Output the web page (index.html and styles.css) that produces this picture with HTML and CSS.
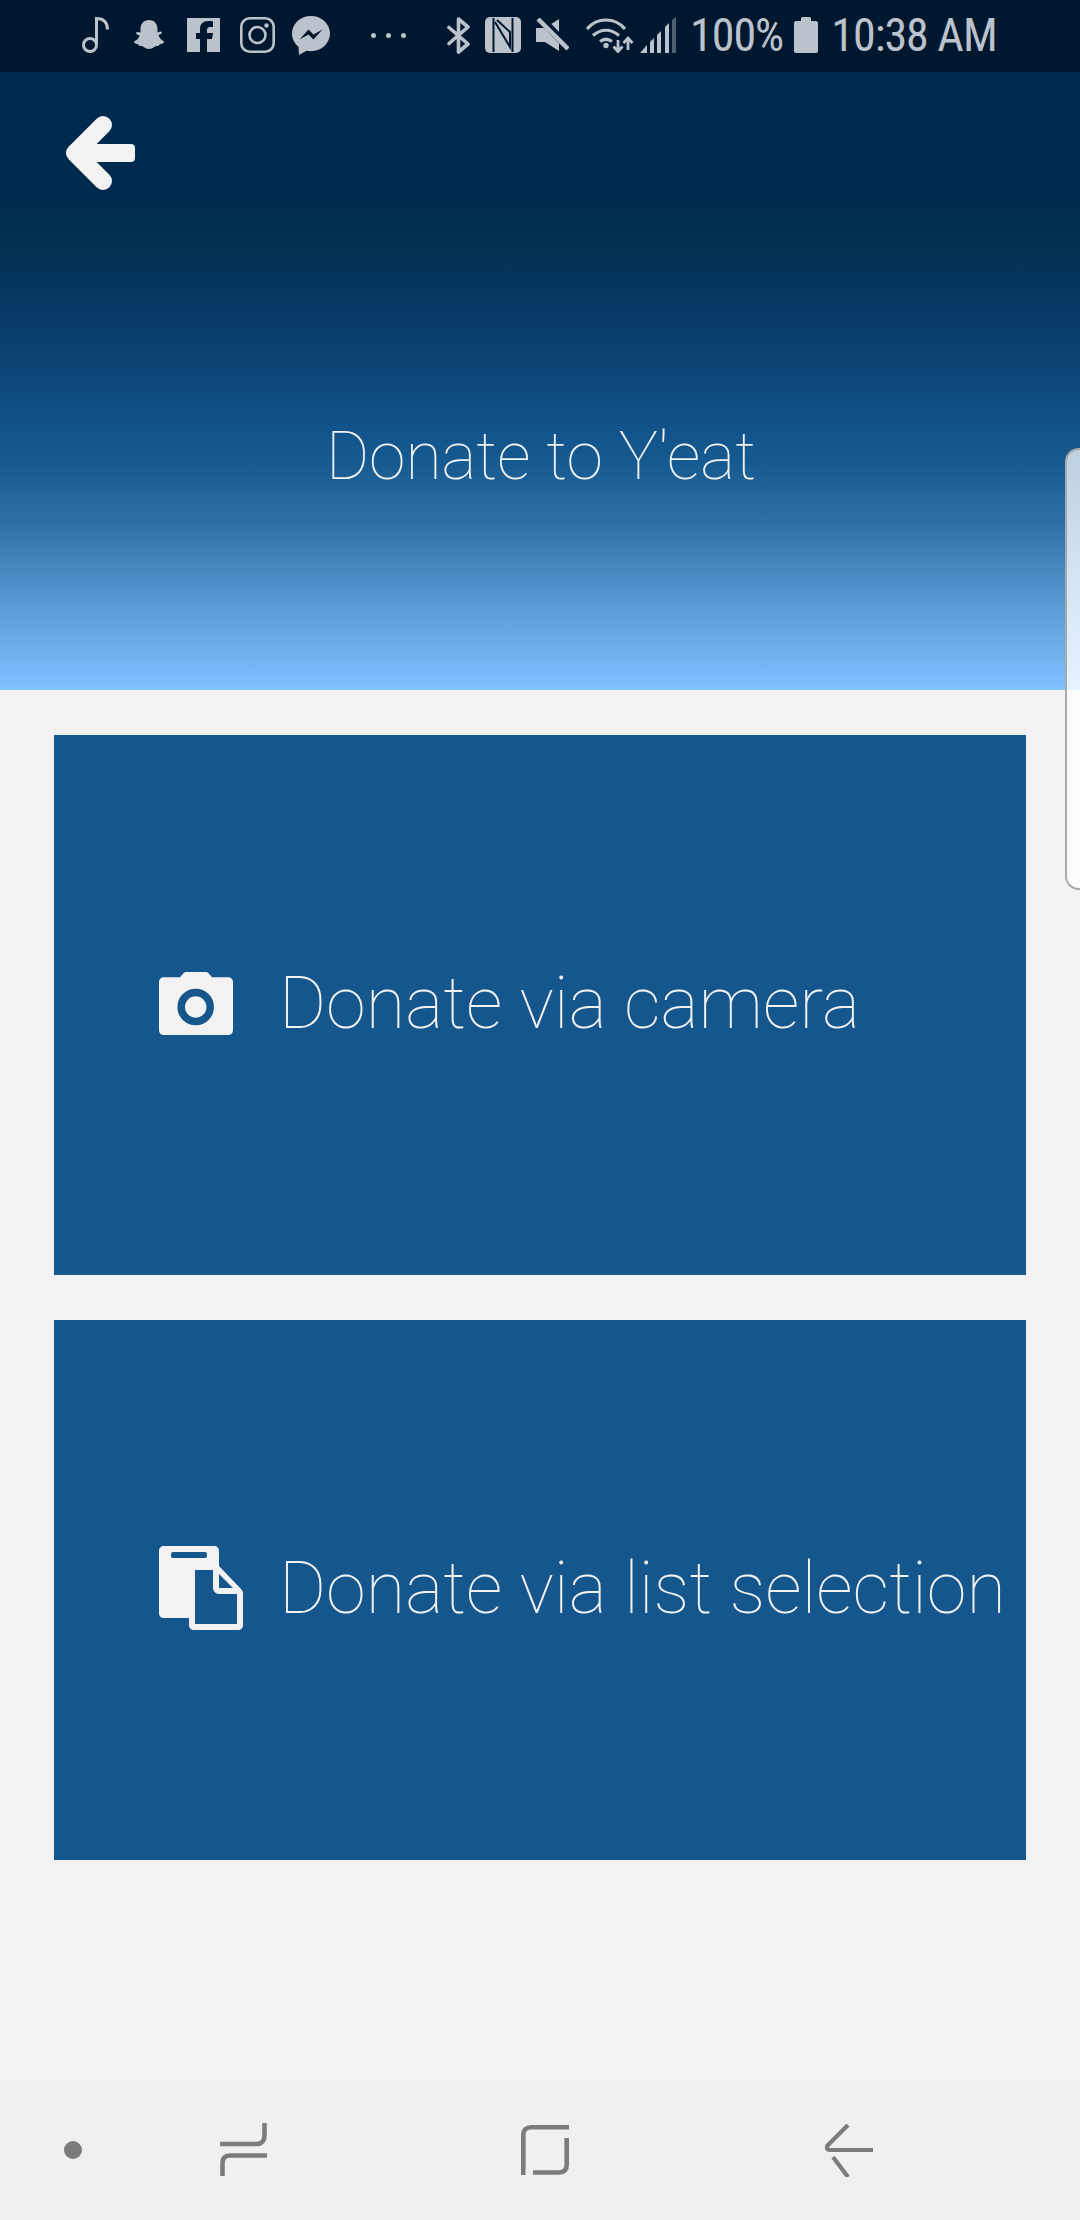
FILE: index.html
```html
<!DOCTYPE html>
<html lang="en">
<head>
    <meta charset="UTF-8">
    <meta name="viewport" content="width=device-width, initial-scale=1.0">
    <title>Donate to Y'eat</title>
    <link rel="stylesheet" href="styles.css">
</head>
<body>
    <div class="status-bar">
        <svg class="ico" width="27" height="36" viewBox="0 0 27 36"><circle cx="8" cy="28" r="6.500" fill="none" stroke="#bcc2cb" stroke-width="3"/><path d="M14.500 28V1.500c7 0 11 4 11 11" fill="none" stroke="#bcc2cb" stroke-width="3"/></svg>
        <svg class="ico ic-ghost" width="30" height="30" viewBox="0 0 30 30"><path d="M15 0c5.500 0 8.500 4 8.500 9v3.500l3-1c1.500 0 2 1.500.5 2.500l-2.500 1c.5 3 3 5 5.500 6.500 0 2-2.500 2.500-4.500 3-.5 1.500-1 1.500-3 1.500-2 0-3.500 3-7.500 3s-5.500-3-7.500-3c-2 0-2.500 0-3-1.500-2-.5-4.500-1-4.500-3C2.500 20.500 5 18.500 5.500 15.500L3 14.500c-1.500-1-1-2.500.5-2.500l3 .5V9C6.500 4 9.500 0 15 0z" fill="#bcc2cb"/></svg>
        <svg class="ico ic-fb" width="33" height="34" viewBox="0 0 33 34"><rect width="33" height="34" fill="#bcc2cb"/><path d="M13 34V21H9v-6h4v-4c0-5 3-8 8-8 2 0 4 .2 5 .3V9h-3c-2 0-3 1-3 3v3h6l-1 6h-5v13z" fill="#00182f"/></svg>
        <svg class="ico ic-insta" width="35" height="36" viewBox="0 0 35 36"><rect x="1.300" y="1.300" width="32.400" height="33.400" rx="8.500" fill="none" stroke="#bcc2cb" stroke-width="2.600"/><circle cx="17.500" cy="18" r="8" fill="none" stroke="#bcc2cb" stroke-width="2.600"/><circle cx="26.500" cy="8.500" r="2.200" fill="#bcc2cb"/></svg>
        <svg class="ico ic-msg" width="38" height="39" viewBox="0 0 38 39"><path d="M19 0C8.500 0 0 7.800 0 17.500c0 5.300 2.500 10 6.500 13.200L7 39l7.500-4.300c1.400.3 3 .5 4.500.5 10.500 0 19-8 19-17.700S29.500 0 19 0z" fill="#bcc2cb"/><path d="M7.500 23.500l9-10 5 5 9-5-9 10-5-5z" fill="#00182f"/></svg>
        <div class="status-dots"><i></i><i></i><i></i></div>
        <svg class="ico ic-bt" width="23" height="37" viewBox="0 0 23 37"><path d="M2 10.500l19 16.500-9.500 8V2L21 10 2 26.500" fill="none" stroke="#bcc2cb" stroke-width="3.600" stroke-linejoin="round" stroke-linecap="round"/></svg>
        <svg class="ico ic-nfc" width="36" height="36" viewBox="0 0 36 36"><rect width="36" height="36" rx="5" fill="#bcc2cb"/><path d="M8.500 1v34M27.500 1v34" stroke="#00182f" stroke-width="2"/><path d="M10 5l15 25V15L12 3" fill="none" stroke="#00182f" stroke-width="2"/></svg>
        <svg class="ico ic-mute" width="33" height="34" viewBox="0 0 33 34"><path d="M0 10h9l14-9v32L9 24H0z" fill="#bcc2cb"/><path d="M4 0l32 33" stroke="#00182f" stroke-width="8"/><path d="M2 1l30 30" stroke="#bcc2cb" stroke-width="4.500"/></svg>
        <svg class="ico ic-wifi" width="48" height="35" viewBox="0 0 48 35"><g fill="none" stroke="#bcc2cb" stroke-width="3.200"><path d="M1 11C11-1 29-1 39 11"/><path d="M7 17.500c8-7 18-7 26 0"/><path d="M14 23.500c4-3 8-3 12 0"/></g><circle cx="20" cy="27.500" r="2.700" fill="#bcc2cb"/><path d="M32 22v11M27.500 28.500l4.500 5 4.500-5M42 32V20M37.500 25l4.500-5 4.500 5" fill="none" stroke="#bcc2cb" stroke-width="2.800"/></svg>
        <svg class="ico ic-signal" width="36" height="36" viewBox="0 0 36 36"><path d="M0 36l7-8v8zM10 36V25l4-4v15zM17 36V18l4-4v22zM25 36V10l4-4v30z" fill="#bcc2cb"/><path d="M32 36V3l4-3v36z" fill="#4c5f73"/></svg>
        <span class="status-text ic-pct">100%</span>
        <svg class="ico ic-batt" width="24" height="36" viewBox="0 0 24 36"><path d="M7 1.500C7 .5 8 0 9 0h6c1 0 2 .5 2 1.500V4h5c1 0 2 1 2 2v28c0 1-1 2-2 2H2c-1 0-2-1-2-2V6c0-1 1-2 2-2h5z" fill="#bcc2cb"/></svg>
        <span class="status-text ic-time">10:38 AM</span>
    </div>

    <header class="top">
        <button class="back-btn">
            <svg width="69" height="74" viewBox="0 0 69 74"><path d="M37 9L9 37l28 28" fill="none" stroke="#f2f2f2" stroke-width="18" stroke-linecap="round" stroke-linejoin="round"/><rect x="9" y="28" width="60" height="18" rx="4" fill="#f2f2f2"/></svg>
        </button>
        <h1>Donate to Y'eat</h1>
    </header>

    <main class="options">
        <a class="option">
            <div class="option-icon">
                <svg width="74" height="63" viewBox="0 0 74 63"><path d="M5 5.300h16l3.500-4C25 .6 25.800 0 27 0h20c1.200 0 2 .6 2.500 1.300l3.500 4h16c3 0 5 2 5 5V58c0 3-2 5-5 5H5c-3 0-5-2-5-5V10.300c0-3 2-5 5-5z" fill="#f2f2f2"/><circle cx="36.700" cy="35" r="14.500" fill="none" stroke="#15568c" stroke-width="7.500"/></svg>
            </div>
            <span>Donate via camera</span>
        </a>
        <a class="option">
            <div class="option-icon">
                <svg width="84" height="84" viewBox="0 0 84 84"><path d="M5 0h50c3 0 5 2 5 5v15l22 23c1.500 1.500 2 3 2 5v31c0 3-2 5-5 5H35c-3 0-5-2-5-5v-7H5c-3 0-5-2-5-5V5c0-3 2-5 5-5z" fill="#f2f2f2"/><rect x="12" y="6" width="36" height="6" rx="2" fill="#15568c"/><path d="M36 24h18v18c0 3 3 6 6 6h18v30H36z" fill="#15568c"/><path d="M60 28l14 14H60z" fill="#15568c"/></svg>
            </div>
            <span>Donate via list selection</span>
        </a>
    </main>

    <div class="edge-panel"></div>

    <nav class="nav-bar">
        <i class="nav-dot"></i>
        <svg class="recents" width="47" height="53" viewBox="0 0 47 53"><path d="M44.500 0v13c0 5-3 8-8 8H0M2.500 53V40c0-5 3-7.500 8-7.500H47" fill="none" stroke="#7c7c7c" stroke-width="4.600"/></svg>
        <svg class="home" width="48" height="50" viewBox="0 0 48 50"><path d="M2.300 50V10c0-5 3-7.700 8-7.700H48M45.700 13v27c0 5-3 7.500-8 7.500H12" fill="none" stroke="#7c7c7c" stroke-width="4.600"/></svg>
        <svg class="back" width="48" height="53" viewBox="0 0 48 53"><path d="M23 1L3 21c-2 2-1.500 5 2 5h43M8 33l15 20" fill="none" stroke="#7c7c7c" stroke-width="4.200"/></svg>
    </nav>
</body>
</html>
```

FILE: styles.css
```css
html, body {
    margin: 0;
    padding: 0;
}

body {
    width: 1080px;
    height: 2220px;
    background-color: #f2f2f2;
    font-family: 'Roboto', sans-serif;
    display: flex;
    flex-direction: column;
    position: relative;
    overflow: hidden;
}

.ico {
    display: block;
    flex-shrink: 0;
}

.status-bar {
    height: 72px;
    background-color: #00182f;
    display: flex;
    align-items: center;
    padding: 0 0 2px 82px;
    box-sizing: border-box;
    flex-shrink: 0;
}

/* spacing of the status icons, each one measured from the previous */
.ic-ghost { margin-left: 25px; }
.ic-fb { margin-left: 23px; }
.ic-insta { margin-left: 20px; }
.ic-msg { margin-left: 17px; }
.ic-bt { margin-left: 41px; }
.ic-nfc { margin-left: 15px; }
.ic-mute { margin-left: 15px; }
.ic-wifi { margin-left: 17px; }
.ic-signal { margin-left: 6px; }
.ic-pct { margin-left: 14px; }
.ic-batt { margin-left: 11px; }
.ic-time { margin-left: 13px; letter-spacing: 0.4px; }

.status-dots {
    display: flex;
    gap: 10px;
    margin-left: 41px;
}

.status-dots i {
    width: 5px;
    height: 5px;
    border-radius: 50%;
    background-color: #bcc2cb;
}

.status-text {
    color: #bcc2cb;
    font-size: 46px;
    font-stretch: 75%;
    letter-spacing: -1px;
    line-height: 1;
}

.top {
    height: 618px;
    flex-shrink: 0;
    background: linear-gradient(to bottom, #002a4e 0%, #002a4e 19%, #02304f 27%, #05365f 35%, #0c4272 46%, #11528a 57%, #155a90 63%, #3070a8 73%, #4282ba 78.5%, #62a3de 89%, #80c0ff 100%);
    position: relative;
    display: flex;
    justify-content: center;
    align-items: center;
    padding: 151px 0 0 2px;
    box-sizing: border-box;
}

.back-btn {
    position: absolute;
    left: 66px;
    top: 44px;
    padding: 0;
    border: none;
    background: none;
}

.back-btn svg {
    display: block;
}

h1 {
    margin: 0;
    color: #f2f2f2;
    font-size: 66px;
    font-weight: 100;
    line-height: 1;
}

.options {
    padding: 45px 54px;
    display: flex;
    flex-direction: column;
    gap: 45px;
}

.option {
    height: 540px;
    background-color: #15568c;
    color: #f2f2f2;
    display: flex;
    align-items: center;
    padding: 0 0 4px 105px;
    box-sizing: border-box;
    font-size: 72px;
    font-weight: 100;
    white-space: nowrap;
}

.option-icon {
    width: 84px;
    flex-shrink: 0;
    margin-right: 36px;
}

.option-icon svg {
    display: block;
}

.edge-panel {
    position: absolute;
    left: 1065px;
    top: 448px;
    width: 15px;
    height: 442px;
    box-sizing: border-box;
    border: 2px solid #a9a9a9;
    border-right: none;
    border-radius: 14px 0 0 14px;
    background: linear-gradient(to bottom, rgba(255,255,255,0.72) 0, rgba(255,255,255,0.8) 240px, #fbfbfb 240px);
}

.nav-bar {
    position: absolute;
    left: 0;
    bottom: 0;
    width: 100%;
    height: 140px;
    background-color: #f0f0f0;
}

.nav-bar > * {
    position: absolute;
}

.nav-dot {
    left: 64px;
    top: 61px;
    width: 18px;
    height: 18px;
    border-radius: 50%;
    background-color: #7c7c7c;
}

.recents {
    left: 220px;
    top: 43px;
}

.home {
    left: 521px;
    top: 45px;
}

.back {
    left: 825px;
    top: 44px;
}
```
